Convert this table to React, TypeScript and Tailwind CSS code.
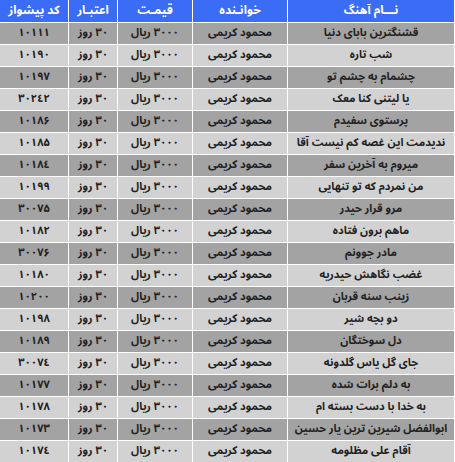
import React from "react";

const rows: [string, string][] = [
  ["قشنگترین بابای دنیا", "۱۰۱۱۱"],
  ["شب تاره", "۱۰۱۹۰"],
  ["چشمام به چشم تو", "۱۰۱۹۷"],
  ["یا لیتنی کنا معک", "۳۰۲٤۲"],
  ["پرستوی سفیدم", "۱۰۱۸۶"],
  ["ندیدمت این غصه کم نیست آقا", "۱۰۱۸۵"],
  ["میروم به آخرین سفر", "۱۰۱۸٤"],
  ["من نمردم که تو تنهایی", "۱۰۱۹۹"],
  ["مرو قرار حیدر", "۳۰۰۷۵"],
  ["ماهم برون فتاده", "۱۰۱۸۲"],
  ["مادر جوونم", "۳۰۰۷۶"],
  ["غضب نگاهش حیدریه", "۱۰۱۸۰"],
  ["زینب سنه قربان", "۱۰۲۰۰"],
  ["دو بچه شیر", "۱۰۱۹۸"],
  ["دل سوختگان", "۱۰۱۸۹"],
  ["جای گل یاس گلدونه", "۳۰۰۷٤"],
  ["به دلم برات شده", "۱۰۱۷۷"],
  ["به خدا با دست بسته ام", "۱۰۱۷۸"],
  ["ابوالفضل شیرین ترین یار حسین", "۱۰۱۷۳"],
  ["آقام علی مظلومه", "۱۰۱۷٤"],
];

const headers = ["نـــام آهنگ", "خوانـنده", "قیمـت", "اعتبـار", "کد پیشواز"];

export default function App() {
  return (
    <div className="bg-white w-[455px] h-[462px]">
      <div
        dir="rtl"
        className="w-[454px] flex flex-col gap-[1px] text-[11px] font-bold [font-family:'Noto_Sans_Arabic',Tahoma,sans-serif]"
      >
        <div className="grid grid-cols-[166px_94px_74px_48px_68px] gap-x-[1px] h-[22px] text-[12px]">
          {headers.map((h, i) => (
            <div key={i} className="bg-[#3b6cf5] text-white flex items-center justify-center">
              {h}
            </div>
          ))}
        </div>
        {rows.map(([name, code], i) => {
          const bg = i % 2 === 0 ? "bg-[#a3a3a3]" : "bg-[#d2d2d2]";
          const cells = [name, "محمود کریمی", "۳۰۰۰ ریال", "۳۰ روز", code];
          return (
            <div key={i} className="grid grid-cols-[166px_94px_74px_48px_68px] gap-x-[1px] h-[21px]">
              {cells.map((c, j) => (
                <div key={j} className={`${bg} text-[#222] flex items-center justify-center whitespace-nowrap`}>
                  {c}
                </div>
              ))}
            </div>
          );
        })}
      </div>
    </div>
  );
}
